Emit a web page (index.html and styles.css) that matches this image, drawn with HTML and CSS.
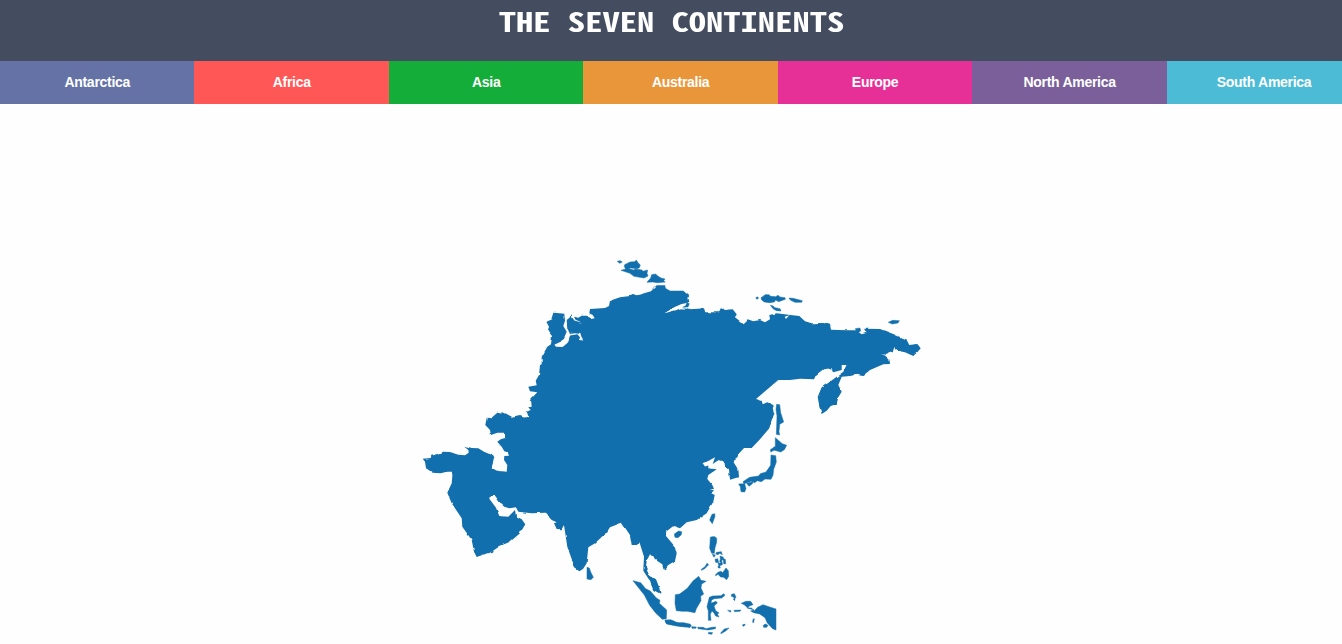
FILE: index.html
```html
<!DOCTYPE html>
<html lang="en">
<head>
<meta charset="utf-8">
<title>The Seven Continents</title>
<link rel="stylesheet" href="styles.css">
</head>
<body>
<header class="header"><h1 class="title">THE SEVEN CONTINENTS</h1></header>
<nav class="tabs">
  <button class="tab antarctica">Antarctica</button>
  <button class="tab africa">Africa</button>
  <button class="tab asia">Asia</button>
  <button class="tab australia">Australia</button>
  <button class="tab europe">Europe</button>
  <button class="tab north-america">North America</button>
  <button class="tab south-america">South America</button>
</nav>
<main class="content">
<svg class="map" viewBox="0 104 1342 540" role="img" aria-label="Asia">
  <defs>
    <!-- roughens the coastline -->
    <filter id="coast" x="-2%" y="-2%" width="104%" height="104%" color-interpolation-filters="sRGB">
      <feTurbulence type="fractalNoise" baseFrequency="0.14" numOctaves="1" seed="4" result="noise"/>
      <feDisplacementMap in="SourceGraphic" in2="noise" scale="3" xChannelSelector="R" yChannelSelector="G"/>
      <feGaussianBlur stdDeviation="0.35"/>
    </filter>
  </defs>
  <!-- mainland -->
  <path filter="url(#coast)" d="M422.7 458.7L430.7 458 431.3 455.7 438.3 454 443.3 451.7 450 452 458.3 454.7 465 455.3 468.7 452.7 468.3 449 464.3 445.7 471.7 448 478.3 448.3 484 451.7 489.3 454 491.7 452.7 494.3 457.3 493.3 461.7 491.7 467.3 498.3 471 506.7 471.7 507.3 465 504 460 504.3 456 509 455.7 507.7 452.3 504.3 451.3 501.7 446.7 497.3 441.7 500.7 439.3 505 438 505 432.7 497.3 432.7 491 435 490 430 485.3 425 486.7 417.7 491 418.3 497.3 412.7 501 413.5 503 412.3 506.7 414 511.7 416.7 520 415 524 416.5 528.3 416 526.7 411.7 530.7 410 528.3 407.3 530.7 406.7 530 400 537.3 392.3 530 391.3 528.3 386.7 536.7 385.3 535.7 380.7 539 375 540 365 541.7 364.3 541.7 356.7 547.3 346.7 551 344.3 552 336 547.7 330.7 549 326.7 546.3 321.7 552.3 319.3 554.3 312.7 564.3 313.7 565 320.7 563.3 326 566.7 331.7 564.3 337.3 560.7 341.7 554.3 344.7 556 346.7 562.7 347 567.7 342.7 570 335.5 577.3 334.3 580 337.3 579 340 583.3 340.5 581.5 338 580.3 334 575 333.3 570 334 567.3 328.3 566.7 320 570 317.3 572 314 572 317 574.3 320.5 583.3 323 575.5 319.7 574 316.7 578.3 317.7 581.7 315.7 586 315.7 591 319 594.7 318.3 592.7 315 589.3 313.3 590 309 605 308 609 306 610 300.7 620 297.3 630 296 631 294.5 634 295.5 640 294.7 644 293.3 651 291.3 656.7 285.3 665 285.3 665.7 288.3 670 290.7 683.3 290.7 689.3 296 687.5 298.5 688.3 301.7 681.7 304 674 307.7 664.3 313.3 676.7 310 681 308 690 309.3 704 308.3 705.3 312.3 719.3 312.3 721.3 308.3 725 310 732.7 309.3 736.7 314.3 735 318.3 742.7 324.3 747.7 319.3 753.3 321.3 760 320 765 322.3 770 319.3 769.3 315 776.7 313.3 788.3 314.7 799.3 316 805 321.3 811.7 323.3 823.3 323 830 324.7 831 329.7 846.7 330.3 855.7 330.3 861.7 334.3 865.3 333.3 864.3 328.7 880 329 893.3 334 906.7 340 909.3 345 917.3 344 920.7 348.3 917.3 352.3 913.3 356 905 352.3 898.3 351 894.3 347.3 892.7 352.3 886.7 354.7 881 354.3 885 355.5 889.3 359.3 890 364 883.3 364.3 870 370 862.7 376 856.7 374.7 850 376 841.7 376.7 838.3 385 841.7 391.7 838.3 397.3 836.7 404 830.7 406 826.7 410.7 821.7 414 819.3 406.7 817.7 396.7 821.7 387.3 830 381.7 843.3 371.7 846.5 365 841.7 365 841.7 370 833.3 372.3 831.7 368.3 823.3 369.3 816 375 814 379.3 800 378.7 790 380 778.3 380 756 399 761.7 400.7 762.7 404.3 767.3 402.3 773.3 405 774.7 412.7 771.7 420 769.3 428.3 760 439.3 751.7 448 744 448 739.3 453.3 737.3 457.3 732.7 460.7 737.3 468.3 738 477.3 730 479.7 729.3 473.3 729 469 725 466 724.3 461 718.3 460.3 712.7 464 715 457.3 708.3 461 702.3 462.7 705 466.5 708.3 465.5 708.3 468.3 716.7 469.3 708.3 475 707.3 479 712.3 485 714 489 710 489 714 490.5 711 493 714.7 495 713.3 501.7 706.7 513.3 696.7 520 686.7 522.3 680 528.3 673.3 526 666 531.7 666 536 675 546.7 676.7 553.3 675 561 668.3 565 664 570 662.3 564.3 657.3 561 650 554.3 646.7 560.7 646 568.3 649.3 575.3 656 579.3 659 586.7 660.7 594 653.3 590 649.3 580 643.3 570.7 644 556.7 639.3 541.7 637 545 631.7 545 630 535 621.7 522.7 610 527.3 606.7 532.3 595 543.3 588.3 547.3 586.7 563.3 583 569 579.3 571.3 575 568.3 567.3 546.7 564 525 561.7 529.3 556.7 529 554 523.3 556.7 522.3 551.7 520 545 512.7 531.7 513.3 518.3 511.7 516 507.3 509.3 508.3 504.3 506.7 498.3 501.7 494.3 496 490 496 489.3 498.7 496 507.7 499.3 516 508.3 516.7 515 510 516 516 521.7 519.3 525.3 524.3 520 533.3 510 541.7 500 546 491.7 551.7 476.7 557 474 551.7 471.7 540 462.3 526.7 461.7 518.3 451.7 503.3 447.3 492.7 451.7 483.3 452.7 471.7 446.7 471.7 440.7 473.3 432.7 472.7 426 468.3 425 461.7Z"/>
  <!-- arctic islands, west -->
  <g class="islands" transform="translate(520 250) scale(.3333)">
    <path d="M292 34l8-2 7 4-8 4zM314 44l16-8 14-1 5-5 4 7 8 8-3 8-6 3-20-2-16 2-3-7zM303 61l12-3 8-4 10 4 8 2 5-3 20 3 3 4 14-4-2 10 3 8-12 6-30-5-12-9zM381 97l11-13 3-10 12-2 6 6 10 6 12 3-4 5 5 4-24 2-14-2zM470 168l30-12 8 5-4 10-20 1zM501 176l10 2-8 5z"/>
    <path class="water" d="M436 189l27-17 20-9 17-4-4 8-10 5 10 7-28-3z"/>
  </g>
  <!-- arctic islands, east, and Sakhalin -->
  <g class="islands" transform="translate(680 280) scale(.3333)">
    <path d="M228 52l6-1 1 5-6 1zM243 53l8-5 4-4 12 0 5 5 15 1 7-4 6 5 15 2 1 5-12 4-8 3-9-5-4 6-14 2-16-2-8-6zM327 54l12 1 28 7-2 5-20 0-13-6zM271 76l8 2 6 5 15 3 3 7-13-1-10-5zM625 127l13-6 20 1-4 7-17 3zM526 146l14-2 2 9-10 6zM290 373l9 1 3 24 9 28-12 7-2 22 2 10-10-2 1-24 1-31-3-20z"/>
    <path class="water" d="M314 110l15-4-6 5-5 6z"/>
  </g>
  <!-- Japan and Taiwan -->
  <g class="islands" transform="translate(680 380) scale(.3333)">
    <path d="M286 173l21 18 13 5-7 13-11 7-18-5-7 2-4 4-2-8 15-10zM273 225l14 2 2 19-8 22-2 18-6 12-18-1-11 8-12-3-8 6-10-4-22 7-3-6 20-13 27-4 5-7 17-5 14-20zM200 310l19-5-2 6-10 8zM176 312l18-1 4 15-4 10-11-1-2-15zM89 420l7-17 8-2 1 8-8 22z"/>
  </g>
  <!-- Sri Lanka, Sumatra, Java and Hainan -->
  <g class="islands" transform="translate(540 490) scale(.3333)">
    <path d="M141 232l7 2 4 12 8 16-7 7-12-2zM279 272l23 6 15 18 14 7 18 21 11 7-2 9 22 20-1 26-12 2-20-19-18-23-16-31zM375 390l22 2 20 8 33 2v10l-40-4-30-6zM403 132l13-9 9 2-1 9-10 9-9-1z"/>
  </g>
  <!-- maritime Southeast Asia -->
  <g class="islands" transform="translate(620 500) scale(.3333)">
    <path d="M166 284l13-2 23-17 17-22 17-14 7 12 15 3-13 8-2 12 8 18-9 7 1 13-14 24-4 12-23-4-14 0-19-2-4-22zM135 361l17-2 18 9 22 0 22 7-4 7-29-3-43-9zM215 380l14 1-2 4-11 0zM233 382l16 0 9 4 18-4 11-1-1 5-21 4-31-4zM266 397l12 1-3 5-10-2zM302 399l11-12 14-3-10 9-14 8zM271 112l5-2 9 0 5 5 0 12-5 16-2 17-8 0-6-15 1-15zM277 163l9 2-4 7zM290 157l14-2 3 9-8-4-5 4-7-2zM285 178l8-2 3 12-9-1zM300 168l9 3 5 10-8-2-1 11-6-5 2-8zM294 190l13-2 0 6-10 4zM310 178l6 0 1 14-6-1zM294 198l5 0 2 6-6 0zM286 225l8-8 9-3 5 4 10-14 7 8 1 17-6 10-9-7-9-1-8-8-7 4zM244 208l11-8 6-10 5 4-12 12-10 5zM268 292l10-4 25-1 8-6 4 5-10 8-22 2-8 4-2 10 15-6 4 5-10 9 5 14 10 7-5 3 5 9-10-3-5-9-6-6-5 10 2 18-8 0 0-28-4-13zM335 283l8-2 5 10-5 7-2-7-7-2zM340 298l5-2-1 6zM323 331l10 1-2 5zM342 331l21-1-3 4-16 1zM364 310l14-6 14 0 7 10-11 4-5 6-9-9zM382 324l12 0 9 8 10-10 16-8 20 7 19 6v63l-10-4-16-17-7-16-16-11-18-4-9-5 10-3zM399 358l4-2-2 12-3-1zM367 375l6-3 3 3-6 4zM430 376l6-4 8 4-4 6-9 0z"/>
  </g>
</svg>
</main>
</body>
</html>
```
FILE: styles.css
```css
* { box-sizing: border-box; }
body { margin: 0; background: #fefefe; overflow: hidden; font-family: "Liberation Sans", Arial, sans-serif; }
.header { height: 61px; background: #444c5f; text-align: center; }
.title { margin: 0; padding-left: 1px; color: #fff; font: bold 34.56px/52px "Noto Sans Mono CJK JP", "DejaVu Sans Mono", monospace; white-space: nowrap; transform: scaleY(.77); transform-origin: 50% 1px; }
.tabs { display: flex; width: 1361.3px; height: 43px; }
.tab { flex: 1; padding: 0; border: 0; color: #fff; font: bold 14px/43px "Liberation Sans", Arial, sans-serif; letter-spacing: -.28px; }
.antarctica { background: #6472a5; }
.africa { background: #ff5756; }
.asia { background: #15ad39; }
.australia { background: #e9963b; }
.europe { background: #e73097; }
.north-america { background: #7a5f9a; }
.south-america { background: #4cbbd6; }
.content { height: 540px; }
.map { display: block; width: 1342px; height: 540px; fill: #126fad; }
.islands { stroke: #126fad; stroke-width: 1.5; stroke-linejoin: round; }
.water { fill: #fefefe; stroke: none; }
```
